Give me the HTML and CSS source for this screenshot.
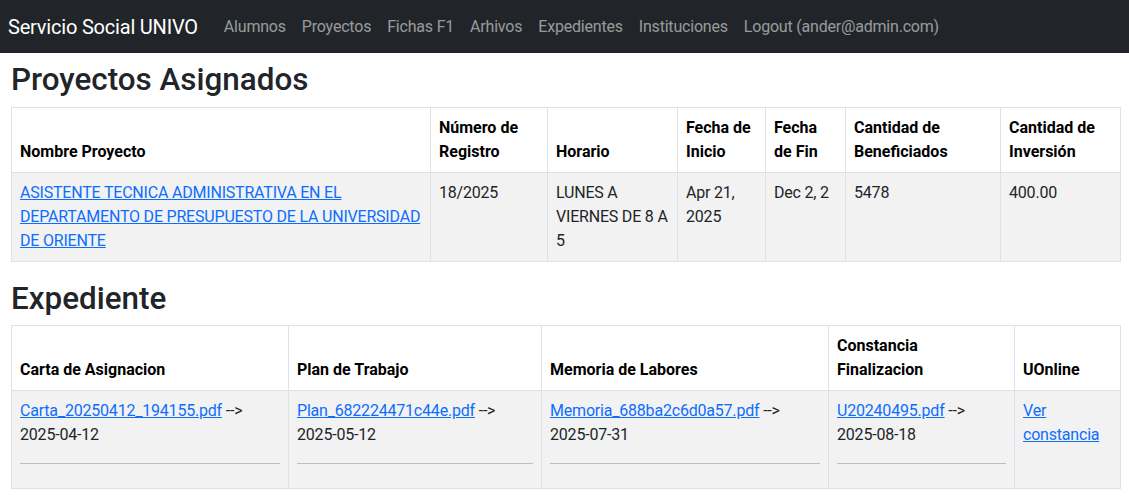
FILE: index.html
```html
<!DOCTYPE html>
<html lang="es">
<head>
<meta charset="utf-8">
<title>Servicio Social UNIVO</title>
<link rel="stylesheet" href="styles.css">
</head>
<body>
<nav class="navbar">
  <a class="brand" href="#">Servicio Social UNIVO</a>
  <ul class="nav">
    <li><a class="nav-link" href="#">Alumnos</a></li>
    <li><a class="nav-link" href="#">Proyectos</a></li>
    <li><a class="nav-link" href="#">Fichas F1</a></li>
    <li><a class="nav-link" href="#">Arhivos</a></li>
    <li><a class="nav-link" href="#">Expedientes</a></li>
    <li><a class="nav-link" href="#">Instituciones</a></li>
    <li><a class="nav-link" href="#">Logout (ander@admin.com)</a></li>
  </ul>
</nav>
<main class="container">
  <h2 class="title">Proyectos Asignados</h2>
  <table class="table">
    <colgroup>
      <col class="c419"><col class="c117"><col class="c130"><col class="c88"><col class="c80"><col class="c155"><col>
    </colgroup>
    <thead>
      <tr>
        <th>Nombre Proyecto</th>
        <th>Número de Registro</th>
        <th>Horario</th>
        <th>Fecha de Inicio</th>
        <th>Fecha de Fin</th>
        <th>Cantidad de Beneficiados</th>
        <th>Cantidad de Inversión</th>
      </tr>
    </thead>
    <tbody>
      <tr>
        <td><a href="#">ASISTENTE TECNICA ADMINISTRATIVA EN EL DEPARTAMENTO DE PRESUPUESTO DE LA UNIVERSIDAD DE ORIENTE</a></td>
        <td>18/2025</td>
        <td>LUNES A VIERNES DE 8 A 5</td>
        <td>Apr 21, 2025</td>
        <td>Dec 2, 2</td>
        <td>5478</td>
        <td>400.00</td>
      </tr>
    </tbody>
  </table>

  <h2 class="title">Expediente</h2>
  <table class="table">
    <colgroup>
      <col class="c277"><col class="c253"><col class="c287"><col class="c186"><col>
    </colgroup>
    <thead>
      <tr>
        <th>Carta de Asignacion</th>
        <th>Plan de Trabajo</th>
        <th>Memoria de Labores</th>
        <th>Constancia Finalizacion</th>
        <th>UOnline</th>
      </tr>
    </thead>
    <tbody>
      <tr>
        <td><a href="#">Carta_20250412_194155.pdf</a> --&gt; 2025-04-12<hr></td>
        <td><a href="#">Plan_682224471c44e.pdf</a> --&gt; 2025-05-12<hr></td>
        <td><a href="#">Memoria_688ba2c6d0a57.pdf</a> --&gt; 2025-07-31<hr></td>
        <td><a href="#">U20240495.pdf</a> --&gt; 2025-08-18<hr></td>
        <td><a href="#">Ver constancia</a></td>
      </tr>
    </tbody>
  </table>
</main>
</body>
</html>
```

FILE: styles.css
```css
* { box-sizing: border-box; }

body {
  margin: 0;
  font-family: Roboto, "Noto Sans", "Liberation Sans", sans-serif;
  font-size: 16px;
  line-height: 1.5;
  color: #212529;
  background: #fff;
}

a { color: #0d6efd; }

.navbar {
  display: flex;
  align-items: center;
  height: 53px;
  padding: 0 8px;
  background: #212529;
}

.brand {
  font-size: 20px;
  line-height: 30px;
  letter-spacing: -0.2px;
  color: #fff;
  text-decoration: none;
  margin-right: 18px;
}

.nav {
  display: flex;
  list-style: none;
  margin: 0;
  padding: 0;
}

.nav-link {
  display: block;
  padding: 8px;
  letter-spacing: -0.2px;
  color: rgba(255, 255, 255, 0.55);
  text-decoration: none;
}

.container {
  padding: 8px 8px 0 11px;
}

.title {
  margin: 0 0 8px;
  font-size: 31.4px;
  font-weight: 500;
  line-height: 1.2;
}

.table {
  width: 100%;
  table-layout: fixed;
  border-collapse: collapse;
  margin-bottom: 18px;
}

.table th,
.table td {
  border: 1px solid #dee2e6;
  padding: 8px;
  text-align: left;
}

.table th {
  vertical-align: bottom;
  font-weight: 700;
  color: #000;
}

.table td {
  vertical-align: top;
  letter-spacing: -0.2px;
}

.table tbody tr {
  background: #f2f2f2;
}

.table hr {
  margin: 16px 0;
  border: 0;
  border-top: 1px solid #212529;
  opacity: 0.25;
}

.c419 { width: 419px; }
.c117 { width: 117px; }
.c130 { width: 130px; }
.c88 { width: 88px; }
.c80 { width: 80px; }
.c155 { width: 155px; }
.c277 { width: 277px; }
.c253 { width: 253px; }
.c287 { width: 287px; }
.c186 { width: 186px; }
```
